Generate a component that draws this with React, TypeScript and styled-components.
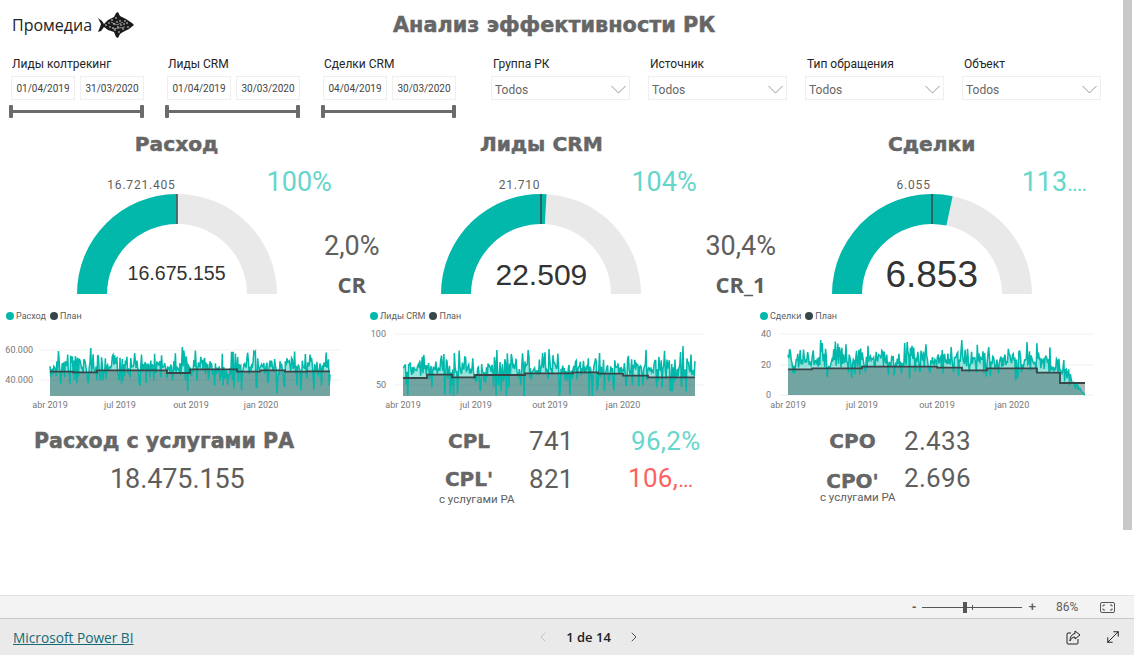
import React from 'react';
import styled, {createGlobalStyle} from 'styled-components';
import {ChevronLeft, ChevronRight, MoveDiagonal} from 'lucide-react';

const TEAL = '#01b8aa';
const DARK = '#374649';
const GREY = '#605e5c';
const HEADING = '#666666';
const HEAVY = '"DejaVu Sans", "Liberation Sans", sans-serif';
const UI = 'Roboto, "Liberation Sans", sans-serif';

const GlobalStyle = createGlobalStyle`
  html, body {
    margin: 0;
    padding: 0;
    height: 100%;
    overflow: hidden;
    background: #fff;
    font-family: ${UI};
  }
`;

const Page = styled.div`
  width: 1134px;
  height: 655px;
  display: flex;
  flex-direction: column;
`;

const Report = styled.div`
  height: 595px;
  display: flex;
`;

const Canvas = styled.div`
  width: 1123px;
  display: flex;
  flex-direction: column;
`;

const ScrollTrack = styled.div`
  width: 11px;
  box-sizing: border-box;
  padding-right: 2px;
`;

const ScrollThumb = styled.div`
  height: 530px;
  background: #c8c8c8;
`;

const Header = styled.div`
  height: 50px;
  position: relative;
  display: flex;
  align-items: center;
  padding-left: 12px;
  box-sizing: border-box;
`;

const Brand = styled.div`
  font-family: "Open Sans", sans-serif;
  font-size: 16px;
  font-weight: 500;
  color: #222;
  margin-right: 5px;
`;

const Title = styled.div`
  position: absolute;
  left: 393px;
  top: 12px;
  font-family: ${HEAVY};
  font-weight: 700;
  font-size: 20.8px;
  line-height: 26px;
  -webkit-text-stroke: 0.5px ${HEADING};
  color: ${HEADING};
  white-space: nowrap;
`;

const Filters = styled.div`
  height: 80px;
  display: flex;
  box-sizing: border-box;
  padding: 5px 0 0 11px;
`;

const DateFilter = styled.div`
  width: 156px;
  flex: none;
`;

const FilterLabel = styled.div`
  font-size: 12px;
  line-height: 18px;
  height: 21px;
  color: #252423;
  padding-left: 1px;
`;

const DateRow = styled.div`
  display: flex;
  gap: 5px;
`;

const DateBox = styled.div`
  width: 64px;
  height: 24px;
  box-sizing: border-box;
  border: 1px solid #efefef;
  font-size: 10px;
  line-height: 23px;
  text-align: center;
  color: #444;
`;

const Slider = styled.div`
  width: 135px;
  height: 13px;
  margin: 5px 0 0 -2px;
  display: flex;
  align-items: center;
`;

const SliderEnd = styled.div`
  width: 4px;
  height: 13px;
  border-radius: 1px;
  background: #6b6b6b;
`;

const SliderLine = styled.div`
  flex: 1;
  height: 3px;
  background: #6b6b6b;
`;

const Dropdowns = styled.div`
  display: flex;
  margin-left: 12px;
  gap: 18px;
`;

const DropFilter = styled.div`
  width: 139px;
  flex: none;
`;

const DropLabel = styled(FilterLabel)`
  padding-left: 2px;
`;

const DropBox = styled.div`
  height: 24px;
  box-sizing: border-box;
  border: 1px solid #efefef;
  display: flex;
  align-items: center;
  justify-content: space-between;
  padding: 3px 3px 0 3px;
  font-size: 12px;
  color: #666;
`;

const Columns = styled.div`
  display: flex;
`;

const Column = styled.div<{$width: number}>`
  width: ${p => p.$width}px;
`;

const GaugeArea = styled.div<{$left: number}>`
  display: flex;
  padding-left: ${p => p.$left}px;
  height: 166px;
`;

const GaugeBlock = styled.div`
  width: 200px;
  flex: none;
`;

const KpiTitle = styled.div`
  height: 28px;
  text-align: center;
  white-space: nowrap;
  font-family: ${HEAVY};
  font-weight: 700;
  font-size: 20.2px;
  line-height: 28px;
  -webkit-text-stroke: 0.5px ${HEADING};
  color: ${HEADING};
`;

const GaugeBox = styled.div`
  position: relative;
  margin-top: 36px;
  width: 200px;
  height: 100px;
`;

const GaugeTarget = styled.div`
  position: absolute;
  right: 101px;
  bottom: 102px;
  font-size: 12px;
  line-height: 14px;
  letter-spacing: 0.8px;
  color: ${GREY};
`;

const GaugeValue = styled.div<{$size: number}>`
  position: absolute;
  left: 0;
  right: 0;
  bottom: ${p => (p.$size > 25 ? 1 : 3)}px;
  text-align: center;
  font-family: "Liberation Sans", sans-serif;
  font-size: ${p => p.$size}px;
  line-height: 36px;
  color: #333;
`;

const Side = styled.div`
  flex: none;
`;

const Percent = styled.div<{$left: number}>`
  margin: 36px 0 0 ${p => p.$left}px;
  font-size: 27px;
  line-height: 32px;
  white-space: nowrap;
  color: #66d6cb;
`;

const Ratio = styled.div<{$left: number}>`
  margin: 32px 0 0 ${p => p.$left}px;
  font-size: 27px;
  line-height: 32px;
  white-space: nowrap;
  color: ${GREY};
`;

const RatioName = styled.div<{$left: number}>`
  margin: 8px 0 0 ${p => p.$left}px;
  font-family: "Open Sans", sans-serif;
  font-size: 22px;
  font-weight: 700;
  line-height: 28px;
  white-space: nowrap;
  color: ${GREY};
`;

const Dots = styled.span`
  font-size: 22px;
  letter-spacing: -1px;
`;

const Legend = styled.div<{$left: number}>`
  height: 15px;
  margin-top: 12px;
  padding-left: ${p => p.$left}px;
  display: flex;
  align-items: center;
  gap: 4px;
  font-size: 9px;
  color: ${GREY};
`;

const LegendDot = styled.span<{$color: string}>`
  width: 8px;
  height: 8px;
  margin-right: -2px;
  border-radius: 50%;
  background: ${p => p.$color};
`;

const ChartSvg = styled.svg`
  display: block;
  margin-top: 2px;
`;

const Metrics = styled.div<{$left: number}>`
  padding-left: ${p => p.$left}px;
  height: 96px;
  margin-top: 12px;
`;

const BigCaption = styled.div`
  font-family: ${HEAVY};
  font-weight: 700;
  font-size: 20.6px;
  line-height: 28px;
  height: 36px;
  -webkit-text-stroke: 0.5px ${HEADING};
  color: ${HEADING};
  white-space: nowrap;
`;

const BigValue = styled.div`
  margin-left: 76px;
  font-size: 27px;
  line-height: 32px;
  letter-spacing: -0.1px;
  color: ${GREY};
`;

const MetricRow = styled.div<{$first: number; $second: number; $gap: number}>`
  display: grid;
  grid-template-columns: ${p => p.$first}px ${p => p.$second}px auto;
  height: 28px;
  margin-top: ${p => p.$gap}px;
  align-items: center;
`;

const MetricName = styled.div<{$width: number}>`
  width: ${p => p.$width}px;
  text-align: center;
  font-family: ${HEAVY};
  font-weight: 700;
  font-size: 20px;
  line-height: 26px;
  -webkit-text-stroke: 0.4px ${HEADING};
  color: ${HEADING};
`;

const MetricValue = styled.div<{$color?: string; $lift?: number}>`
  font-size: 26px;
  line-height: 32px;
  letter-spacing: 0.3px;
  margin-bottom: ${p => p.$lift || 0}px;
  color: ${p => p.$color || GREY};
  white-space: nowrap;
`;

const MetricNote = styled.div<{$shift: number}>`
  font-size: 11.5px;
  line-height: 14px;
  color: ${GREY};
  margin: ${p => p.$shift}px 0 0 -5px;
`;

const StatusBar = styled.div`
  height: 24px;
  box-sizing: border-box;
  border-top: 1px solid #e3e3e3;
  border-bottom: 1px solid #c8c8c8;
  background: #f3f3f3;
  display: flex;
  align-items: center;
  justify-content: flex-end;
  padding-right: 19px;
  color: ${GREY};
`;

const ZoomSign = styled.span`
  font-family: "Liberation Sans", sans-serif;
  font-size: 13px;
  font-weight: 700;
  line-height: 14px;
`;

const ZoomTrack = styled.div`
  position: relative;
  width: 100px;
  height: 1px;
  margin: 0 6px;
  background: #555;
`;

const ZoomThumb = styled.div`
  position: absolute;
  left: 41px;
  top: -5px;
  width: 4px;
  height: 11px;
  background: #555;
`;

const ZoomTick = styled.div`
  position: absolute;
  left: 50px;
  top: -2px;
  width: 1px;
  height: 5px;
  background: #555;
`;

const ZoomLabel = styled.span`
  width: 27px;
  margin: 0 17px 0 20px;
  font-size: 12px;
`;

const Footer = styled.div`
  flex: 1;
  background: #eaeaea;
  display: grid;
  grid-template-columns: 1fr auto 1fr;
  align-items: center;
  padding: 0 12px 0 13px;
`;

const PowerBiLink = styled.a`
  font-family: "Open Sans", sans-serif;
  font-size: 13.7px;
  color: #156b75;
  text-decoration: underline;
`;

const Pager = styled.div`
  display: flex;
  align-items: center;
  gap: 15px;
  margin-left: 42px;
`;

const PagerText = styled.span`
  font-family: "Open Sans", sans-serif;
  font-size: 13px;
  font-weight: 600;
  color: #222;
`;

const FooterIcons = styled.div`
  display: flex;
  justify-content: flex-end;
  align-items: center;
  gap: 23px;
`;

// простой генератор, чтобы график не менялся между запусками
const seeded = (seed: number) => () => {
  seed = (seed + 0x6d2b79f5) | 0;
  let t = Math.imul(seed ^ (seed >>> 15), 1 | seed);
  t = (t + Math.imul(t ^ (t >>> 7), 61 | t)) ^ t;
  return ((t ^ (t >>> 14)) >>> 0) / 4294967296;
};

interface Tick {
  label: string;
  y: number;
}

interface ChartProps {
  width: number;
  gridFrom: number;
  gridTo: number;
  x0: number;
  x1: number;
  ticks: Tick[];
  months: number[];
  plan: [number, number][];
  seed: number;
  base: number;
  up: number;
  down: number;
  bottom: number;
  peaks: [number, number][];
  fade?: boolean;
}

const TOP = 325;

const Chart = ({width, gridFrom, gridTo, x0, x1, ticks, months, plan, seed, base, up, down, bottom, peaks, fade}: ChartProps) => {
  const rnd = seeded(seed);
  const n = 365;
  const pts: [number, number][] = [];
  for (let i = 0; i < n; i++) {
    const x = x0 + ((x1 - x0) * i) / (n - 1);
    const r = rnd();
    const dir = rnd() < 0.62 ? -r * r * up : r * r * down;
    let y = base + (rnd() - 0.5) * 10 + dir;
    if (fade && x > x1 - 38) {
      const k = (x - (x1 - 38)) / 38;
      y = y + (bottom - y) * k * (0.6 + 0.4 * k);
    }
    pts.push([x, Math.min(bottom, y)]);
  }
  peaks.forEach(([px, py]) => {
    const i = Math.round(((px - x0) / (x1 - x0)) * (n - 1));
    pts[i][1] = py;
  });
  const line = pts.map(([x, y], i) => `${i ? 'L' : 'M'}${x.toFixed(2)} ${y.toFixed(2)}`).join(' ');
  const planLine = plan
    .map(([px, py], i) => {
      const next = plan[i + 1] ? plan[i + 1][0] : x1;
      return `${i ? 'L' : 'M'}${px} ${py} L${next} ${py}`;
    })
    .join(' ');
  return (
    <ChartSvg width={width} height={90} viewBox={`0 ${TOP} ${width} 90`}>
      {ticks.map(t => (
        <g key={t.label}>
          <line x1={gridFrom} x2={gridTo} y1={t.y} y2={t.y} stroke="#f0f0f0" strokeWidth={1}/>
          <text x={gridFrom - 8} y={t.y + 3} textAnchor="end" fontSize={9} fill="#777" fontFamily={UI}>{t.label}</text>
        </g>
      ))}
      <path d={`${line} L${x1} ${bottom} L${x0} ${bottom} Z`} fill={TEAL} opacity={0.4}/>
      <path d={`${planLine} L${x1} ${bottom} L${plan[0][0]} ${bottom} Z`} fill={DARK} opacity={0.4}/>
      <path d={line} fill="none" stroke={TEAL} strokeWidth={1.5}/>
      <path d={planLine} fill="none" stroke={DARK} strokeWidth={1.8}/>
      {['abr 2019', 'jul 2019', 'out 2019', 'jan 2020'].map((m, i) => (
        <text key={m} x={months[i]} y={408} textAnchor="middle" fontSize={9} fill="#777" fontFamily={UI}>{m}</text>
      ))}
    </ChartSvg>
  );
};

const arcPoint = (radius: number, frac: number) => {
  const a = Math.PI * (1 - frac);
  return `${(100 + radius * Math.cos(a)).toFixed(2)} ${(100 - radius * Math.sin(a)).toFixed(2)}`;
};

const band = (from: number, to: number) =>
  `M${arcPoint(100, from)} A100 100 0 0 1 ${arcPoint(100, to)} L${arcPoint(70, to)} A70 70 0 0 0 ${arcPoint(70, from)} Z`;

interface GaugeProps {
  frac: number;
  target: string;
  value: string;
  size: number;
}

const Gauge = ({frac, target, value, size}: GaugeProps) => (
  <GaugeBox>
    <svg width={200} height={100} viewBox="0 0 200 100">
      <path d={band(0, 1)} fill="#e9e9e9"/>
      <path d={band(0, frac)} fill={TEAL}/>
      <line x1={100} x2={100} y1={0} y2={30} stroke={DARK} strokeWidth={1.5}/>
    </svg>
    <GaugeTarget>{target}</GaugeTarget>
    <GaugeValue $size={size}>{value}</GaugeValue>
  </GaugeBox>
);

const DropArrow = () => (
  <svg width={15} height={9} viewBox="0 0 15 9" fill="none" stroke="#8c8c8c" strokeWidth={0.9}>
    <path d="M0.5 1 L7.5 8 L14.5 1"/>
  </svg>
);

const Fish = () => (
  <svg width={38} height={30} viewBox="0 0 38 30">
    <path d="M1 8 L5 11 L7 14 L11 10 L17 7 L19 3 L21 2 L23 6 L29 9 L35 13 L37 15 L32 19 L26 22 L23 24 L21 28 L19 27 L17 22 L11 20 L7 17 L4 21 L1 22 L3 17 L4 14 Z" fill="#1a1a1a"/>
    {[[12, 13], [15, 10], [19, 8], [23, 11], [27, 14], [30, 13], [31, 17], [26, 19], [21, 17], [17, 14], [13, 17], [18, 20], [22, 22], [24, 15], [9, 15], [20, 12], [16, 18], [28, 11]].map(([x, y]) => (
      <circle key={`${x}-${y}`} cx={x} cy={y} r={0.75} fill="#fff"/>
    ))}
    <path d="M14 12 L20 15 L26 12 M16 19 L22 18 L28 17" stroke="#fff" strokeWidth={0.5} fill="none"/>
  </svg>
);

const dateFilters = [
  {label: 'Лиды колтрекинг', from: '01/04/2019', to: '31/03/2020'},
  {label: 'Лиды CRM', from: '01/04/2019', to: '30/03/2020'},
  {label: 'Сделки CRM', from: '04/04/2019', to: '30/03/2020'},
];

const dropFilters = ['Группа РК', 'Источник', 'Тип обращения', 'Объект'];

const App = () => {
  return (
    <Page>
      <GlobalStyle/>
      <Report>
        <Canvas>
          <Header>
            <Brand>Промедиа</Brand>
            <Fish/>
            <Title>Анализ эффективности РК</Title>
          </Header>
          <Filters>
            {dateFilters.map(f => (
              <DateFilter key={f.label}>
                <FilterLabel>{f.label}</FilterLabel>
                <DateRow>
                  <DateBox>{f.from}</DateBox>
                  <DateBox>{f.to}</DateBox>
                </DateRow>
                <Slider>
                  <SliderEnd/>
                  <SliderLine/>
                  <SliderEnd/>
                </Slider>
              </DateFilter>
            ))}
            <Dropdowns>
              {dropFilters.map(label => (
                <DropFilter key={label}>
                  <DropLabel>{label}</DropLabel>
                  <DropBox>Todos<DropArrow/></DropBox>
                </DropFilter>
              ))}
            </Dropdowns>
          </Filters>
          <Columns>
            <Column $width={360}>
              <GaugeArea $left={76.6}>
                <GaugeBlock>
                  <KpiTitle>Расход</KpiTitle>
                  <Gauge frac={0.4986} target="16.721.405" value="16.675.155" size={19.6}/>
                </GaugeBlock>
                <Side>
                  <Percent $left={-10}>100%</Percent>
                  <Ratio $left={47.5}>2,0%</Ratio>
                  <RatioName $left={61}>CR</RatioName>
                </Side>
              </GaugeArea>
              <Legend $left={6}>
                <LegendDot $color={TEAL}/> Расход
                <LegendDot $color={DARK}/> План
              </Legend>
              <Chart
                width={360}
                gridFrom={41}
                gridTo={339}
                x0={50}
                x1={330}
                ticks={[{label: '60.000', y: 350}, {label: '40.000', y: 380}]}
                months={[50, 120, 191, 261]}
                plan={[[50, 371.7], [73, 372.3], [97, 370.3], [167, 373], [190, 369.3], [237, 371.7], [260, 370.3], [285, 371.7], [307, 371.3]]}
                seed={11}
                base={369}
                up={15}
                down={22}
                bottom={396}
                peaks={[[91, 348], [182, 347]]}
              />
              <Metrics $left={34}>
                <BigCaption>Расход с услугами РА</BigCaption>
                <BigValue>18.475.155</BigValue>
              </Metrics>
            </Column>
            <Column $width={390}>
              <GaugeArea $left={81.4}>
                <GaugeBlock>
                  <KpiTitle>Лиды CRM</KpiTitle>
                  <Gauge frac={0.5175} target="21.710" value="22.509" size={30}/>
                </GaugeBlock>
                <Side>
                  <Percent $left={-10}>104%</Percent>
                  <Ratio $left={64}>30,4%</Ratio>
                  <RatioName $left={74}>CR_1</RatioName>
                </Side>
              </GaugeArea>
              <Legend $left={10}>
                <LegendDot $color={TEAL}/> Лиды CRM
                <LegendDot $color={DARK}/> План
              </Legend>
              <Chart
                width={390}
                gridFrom={34}
                gridTo={344}
                x0={43}
                x1={335}
                ticks={[{label: '100', y: 334}, {label: '50', y: 385}]}
                months={[43, 116, 190, 263]}
                plan={[[43, 378], [67, 374.7], [92, 377.3], [115, 375], [165, 373.3], [213, 372.3], [238, 373.7], [263, 375.7], [288, 377.3]]}
                seed={29}
                base={370}
                up={16}
                down={26}
                bottom={396}
                peaks={[[323, 346], [168, 350], [189, 349]]}
              />
              <Metrics $left={84}>
                <MetricRow $first={85} $second={102} $gap={-2}>
                  <MetricName $width={50}>CPL</MetricName>
                  <MetricValue>741</MetricValue>
                  <MetricValue $color="#66d6cb">96,2%</MetricValue>
                </MetricRow>
                <MetricRow $first={85} $second={99} $gap={9}>
                  <MetricName $width={50}>CPL'</MetricName>
                  <MetricValue>821</MetricValue>
                  <MetricValue $color="#fd625e">106,<Dots>...</Dots></MetricValue>
                </MetricRow>
                <MetricNote $shift={2}>с услугами РА</MetricNote>
              </Metrics>
            </Column>
            <Column $width={373}>
              <GaugeArea $left={81.7}>
                <GaugeBlock>
                  <KpiTitle>Сделки</KpiTitle>
                  <Gauge frac={0.566} target="6.055" value="6.853" size={37}/>
                </GaugeBlock>
                <Side>
                  <Percent $left={-10}>113<Dots>....</Dots></Percent>
                </Side>
              </GaugeArea>
              <Legend $left={10}>
                <LegendDot $color={TEAL}/> Сделки
                <LegendDot $color={DARK}/> План
              </Legend>
              <Chart
                width={373}
                gridFrom={29}
                gridTo={344}
                x0={38}
                x1={335}
                ticks={[{label: '40', y: 334}, {label: '20', y: 365}, {label: '0', y: 395}]}
                months={[38, 112, 187, 262]}
                plan={[[38, 369.3], [62, 368.3], [112, 366.7], [187, 367.7], [212, 370.3], [237, 368.3], [262, 368.3], [287, 372.7], [310, 383]]}
                seed={47}
                base={362}
                up={18}
                down={16}
                bottom={395}
                peaks={[[212, 340], [157, 342]]}
                fade
              />
              <Metrics $left={75}>
                <MetricRow $first={79} $second={70} $gap={-2}>
                  <MetricName $width={55}>CPO</MetricName>
                  <MetricValue>2.433</MetricValue>
                </MetricRow>
                <MetricRow $first={79} $second={70} $gap={9}>
                  <MetricName $width={55}>CPO'</MetricName>
                  <MetricValue $lift={6}>2.696</MetricValue>
                </MetricRow>
                <MetricNote $shift={0}>с услугами РА</MetricNote>
              </Metrics>
            </Column>
          </Columns>
        </Canvas>
        <ScrollTrack>
          <ScrollThumb/>
        </ScrollTrack>
      </Report>
      <StatusBar>
        <ZoomSign>-</ZoomSign>
        <ZoomTrack>
          <ZoomThumb/>
          <ZoomTick/>
        </ZoomTrack>
        <ZoomSign>+</ZoomSign>
        <ZoomLabel>86%</ZoomLabel>
        <svg width={15} height={11} viewBox="0 0 15 11" fill="none" stroke="#555">
          <rect x={0.5} y={0.5} width={14} height={10} rx={1.5}/>
          <path d="M3 4.5 V3 H5 M10 3 H12 V4.5 M12 6.5 V8 H10 M5 8 H3 V6.5"/>
        </svg>
      </StatusBar>
      <Footer>
        <div><PowerBiLink>Microsoft Power BI</PowerBiLink></div>
        <Pager>
          <ChevronLeft size={16} strokeWidth={1.2} color="#b5b5b5"/>
          <PagerText>1 de 14</PagerText>
          <ChevronRight size={16} strokeWidth={1.4} color="#444"/>
        </Pager>
        <FooterIcons>
          <svg width={15} height={15} viewBox="0 0 15 15" fill="none" stroke="#222" strokeWidth={1}>
            <path d="M5 3 H2 Q1 3 1 4 V13 Q1 14 2 14 H11 Q12 14 12 13 V9"/>
            <path d="M9 1 L14 5 L9 9 V7 C6 7 5 9 4 11 C4 7 6 4 9 3.5 Z" strokeLinejoin="round"/>
          </svg>
          <MoveDiagonal size={18} strokeWidth={1.2} color="#111"/>
        </FooterIcons>
      </Footer>
    </Page>
  );
};

export default App;
